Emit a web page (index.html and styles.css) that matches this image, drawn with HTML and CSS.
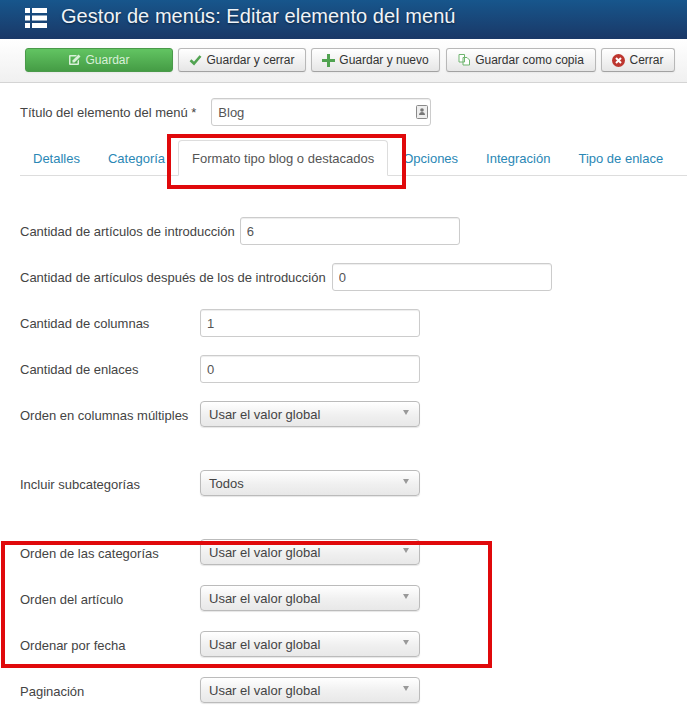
FILE: index.html
```html
<!DOCTYPE html>
<html lang="es">
<head>
  <meta charset="UTF-8" />
  <title>Gestor de menús: Editar elemento del menú</title>
  <link rel="stylesheet" href="styles.css">
</head>
<body>
  <header class="topbar">
    <svg class="topbar-icon" width="22" height="20" viewBox="0 0 22 20" aria-hidden="true">
      <path fill="#fff" d="M0 0h5v5H0zM7 0h15v5H7zM0 7.500h5v5H0zM7 7.500h15v5H7zM0 15h5v5H0zM7 15h15v5H7z"/>
    </svg>
    <h1>Gestor de menús: Editar elemento del menú</h1>
  </header>

  <div class="toolbar">
    <button class="btn btn-save">
      <svg width="13" height="12" viewBox="0 0 13 12"><path fill="#d9f0d9" d="M2 1h7L7.500 2.500H2.500v7h7V7L11 5.500V10a1 1 0 0 1-1 1H2a1 1 0 0 1-1-1V2a1 1 0 0 1 1-1z"/><path fill="#d9f0d9" d="M4.500 6.500 10.500.500l2 2-6 6H4.500z"/></svg>
      Guardar
    </button>
    <button class="btn btn-close-save">
      <svg width="13" height="12" viewBox="0 0 13 12"><path fill="none" stroke="#51a351" stroke-width="2.600" d="M1.500 6.200 5 9.500l6.500-7.500"/></svg>
      Guardar y cerrar
    </button>
    <button class="btn btn-new">
      <svg width="13" height="13" viewBox="0 0 13 13"><path fill="#51a351" d="M5 0h3v5h5v3H8v5H5V8H0V5h5z"/></svg>
      Guardar y nuevo
    </button>
    <button class="btn btn-copy">
      <svg width="13" height="12" viewBox="0 0 13 12"><path fill="#fff" stroke="#6fb56f" d="M1 .500h5.500v7.500H1zM5 3.500h4l2.500 2.500v5H5z"/></svg>
      Guardar como copia
    </button>
    <button class="btn btn-cancel">
      <svg width="13" height="13" viewBox="0 0 13 13"><circle cx="6.500" cy="6.500" r="6.500" fill="#bd362f"/><path stroke="#fff" stroke-width="2" d="m4 4 5 5m0-5-5 5"/></svg>
      Cerrar
    </button>
  </div>

  <main class="content">
    <div class="title-row">
      <label class="title-label">Título del elemento del menú *</label>
      <div class="title-input">
        <span>Blog</span>
        <svg width="12" height="14" viewBox="0 0 12 14"><rect x=".5" y=".5" width="11" height="13" rx="1" fill="#eee" stroke="#8a8a8a"/><circle cx="6" cy="5" r="1.800" fill="#777"/><path fill="#777" d="M3 10c0-2 1.500-3 3-3s3 1 3 3z"/></svg>
      </div>
    </div>

    <nav class="tabs">
      <a class="tab">Detalles</a>
      <a class="tab">Categoría</a>
      <a class="tab tab-active">Formato tipo blog o destacados</a>
      <a class="tab">Opciones</a>
      <a class="tab">Integración</a>
      <a class="tab">Tipo de enlace</a>
    </nav>

    <form class="fields">
      <div class="row">
        <label class="label-auto">Cantidad de artículos de introducción</label>
        <input class="field" type="text" value="6">
      </div>
      <div class="row">
        <label class="label-auto label-long">Cantidad de artículos después de los de introducción</label>
        <input class="field" type="text" value="0">
      </div>
      <div class="row">
        <label>Cantidad de columnas</label>
        <input class="field" type="text" value="1">
      </div>
      <div class="row">
        <label>Cantidad de enlaces</label>
        <input class="field" type="text" value="0">
      </div>
      <div class="row row-select row-gap">
        <label>Orden en columnas múltiples</label>
        <div class="select"><span>Usar el valor global</span><i class="caret"></i></div>
      </div>
      <div class="row row-select row-gap">
        <label>Incluir subcategorías</label>
        <div class="select"><span>Todos</span><i class="caret"></i></div>
      </div>
      <div class="row row-select">
        <label>Orden de las categorías</label>
        <div class="select"><span>Usar el valor global</span><i class="caret"></i></div>
      </div>
      <div class="row row-select">
        <label>Orden del artículo</label>
        <div class="select"><span>Usar el valor global</span><i class="caret"></i></div>
      </div>
      <div class="row row-select">
        <label>Ordenar por fecha</label>
        <div class="select"><span>Usar el valor global</span><i class="caret"></i></div>
      </div>
      <div class="row row-select">
        <label>Paginación</label>
        <div class="select"><span>Usar el valor global</span><i class="caret"></i></div>
      </div>
    </form>
  </main>

  <!-- red annotation boxes drawn over the screenshot -->
  <div class="mark mark-tab"></div>
  <div class="mark mark-order"></div>
</body>
</html>
```

FILE: styles.css
```css
html, body {
  height: 720px;
  overflow: hidden;
}

body {
  margin: 0;
  position: relative;
  background-color: #fff;
  color: #444;
  font-family: "Liberation Sans", Arial, sans-serif;
  font-size: 13px;
}

.topbar {
  display: flex;
  align-items: center;
  gap: 14px;
  height: 39px;
  padding: 0 0 7px 25px;
  box-sizing: border-box;
  background: linear-gradient(to bottom, #17568c, #1a3867);
}

.topbar-icon {
  flex-shrink: 0;
  margin-top: 3px;
}

.topbar h1 {
  margin: 0;
  color: #f0f4f8;
  font-size: 20px;
  font-weight: normal;
  letter-spacing: 0.05px;
  text-shadow: 0 1px 2px rgba(0, 0, 0, 0.5);
}

.toolbar {
  display: flex;
  gap: 5px;
  height: 44px;
  padding: 9px 0 0 25px;
  box-sizing: border-box;
  background: linear-gradient(to bottom, #fff, #f0f0f0);
  border-bottom: 1px solid #d4d4d4;
}

.btn {
  display: flex;
  align-items: center;
  justify-content: center;
  gap: 4px;
  height: 24px;
  padding: 0;
  border: 1px solid #b8b8b8;
  border-bottom-color: #a2a2a2;
  border-radius: 3px;
  background: linear-gradient(to bottom, #fff, #e6e6e6);
  color: #333;
  font-family: inherit;
  font-size: 12px;
  box-shadow: 0 1px 2px rgba(0, 0, 0, 0.05);
}

.btn-save {
  width: 148px;
  background: linear-gradient(to bottom, #62c462, #459c45);
  border-color: #4a9a4a;
  color: #d9f0d9;
}

.btn-close-save { width: 128px; }
.btn-new { width: 129px; }
.btn-copy { width: 150px; margin-left: 1px; }
.btn-cancel { width: 74px; }

.content {
  padding: 15px 0 0 20px;
}

.title-row {
  display: flex;
  align-items: center;
  gap: 15px;
}

.title-input {
  display: flex;
  align-items: center;
  justify-content: space-between;
  width: 220px;
  height: 28px;
  padding: 0 2px 0 6px;
  box-sizing: border-box;
  border: 1px solid #ccc;
  border-radius: 3px;
  box-shadow: inset 0 1px 1px rgba(0, 0, 0, 0.075);
  color: #555;
}

.title-label {
  color: #444;
}

.tabs {
  display: flex;
  align-items: stretch;
  height: 36px;
  margin-top: 14px;
  box-sizing: border-box;
  border-bottom: 1px solid #ddd;
}

.tab {
  padding: 11px 13px 0;
  color: #2a87b5;
}

.tab:nth-child(2) {
  padding-right: 2px;
  margin-left: 2px;
  margin-right: 11px;
}

.tab-active {
  height: 36px;
  box-sizing: border-box;
  padding: 10px 13px 0;
  background-color: #fff;
  border: 1px solid #ddd;
  border-bottom-color: #fff;
  border-radius: 4px 4px 0 0;
  color: #555;
}

.tab:nth-child(4) { margin-left: 2px; }
.tab:nth-child(5) { margin-left: 2px; }
.tab:nth-child(6) { margin-left: 2px; }

.fields {
  padding-top: 41px;
}

.row {
  display: flex;
  align-items: center;
  height: 28px;
  margin-bottom: 18px;
}

.row label {
  width: 180px;
  flex-shrink: 0;
  color: #444;
}

.row .label-auto {
  width: auto;
  margin-right: 5px;
}

.row .label-long {
  margin-right: 6px;
}

.row-select {
  height: 26px;
  margin-bottom: 20px;
}

.row-select label {
  padding-top: 2px;
}

.row-gap {
  margin-bottom: 43px;
}

.field {
  width: 220px;
  height: 28px;
  padding: 0 6px;
  box-sizing: border-box;
  border: 1px solid #ccc;
  border-radius: 3px;
  box-shadow: inset 0 1px 1px rgba(0, 0, 0, 0.075);
  color: #555;
  font-family: inherit;
  font-size: 13px;
}

.select {
  display: flex;
  align-items: center;
  justify-content: space-between;
  width: 220px;
  height: 26px;
  padding: 0 10px 0 8px;
  box-sizing: border-box;
  border: 1px solid #bbb;
  border-radius: 4px;
  background: linear-gradient(to bottom, #fff, #f0f0f0 55%, #e8e8e8);
  box-shadow: 0 1px 1px rgba(0, 0, 0, 0.1);
  color: #444;
}

.select span {
  margin-top: 1px;
}

.caret {
  width: 0;
  height: 0;
  margin-bottom: 3px;
  border-left: 3.500px solid transparent;
  border-right: 3.500px solid transparent;
  border-top: 5px solid #999;
}

.mark {
  position: absolute;
  box-sizing: border-box;
  border: 4px solid #e0090b;
}

.mark-tab {
  left: 167px;
  top: 134px;
  width: 239px;
  height: 55px;
}

.mark-order {
  left: 1px;
  top: 541px;
  width: 491px;
  height: 127px;
}
```
